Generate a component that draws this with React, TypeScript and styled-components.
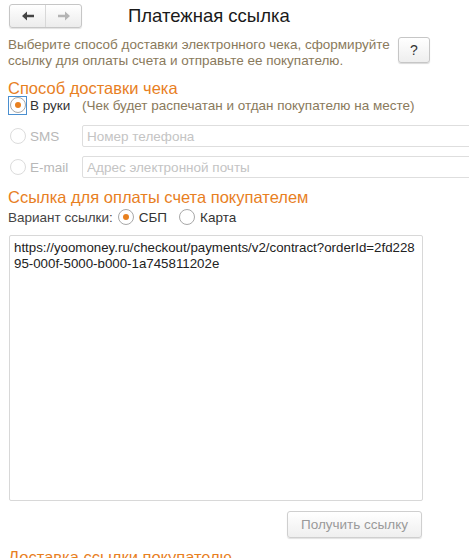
import styled, { createGlobalStyle } from "styled-components";
import { useState } from "react";

const GlobalStyle = createGlobalStyle`
  html, body {
    margin: 0;
    padding: 0;
    background: #ffffff;
    overflow: hidden;
  }
  body {
    font-family: "Liberation Sans", Arial, sans-serif;
    font-size: 13.5px;
    color: #333333;
  }
`;

const URL_TEXT =
  "https://yoomoney.ru/checkout/payments/v2/contract?orderId=2fd22895-000f-5000-b000-1a745811202e";

const App = () => {
  const [kind, setKind] = useState<"sbp" | "card">("sbp");

  return (
    <>
      <GlobalStyle />
      <Page>
        <Header>
          <NavGroup>
            <NavButton>
              <svg width="14" height="10" viewBox="0 0 14 10">
                <path d="M1 5 L6 0.5 V3.8 H13 V6.2 H6 V9.5 Z" fill="#444" />
              </svg>
            </NavButton>
            <NavButton>
              <svg width="14" height="10" viewBox="0 0 14 10">
                <path d="M13 5 L8 0.5 V3.8 H1 V6.2 H8 V9.5 Z" fill="#b4b4b4" />
              </svg>
            </NavButton>
          </NavGroup>
          <Title>Платежная ссылка</Title>
        </Header>

        <IntroRow>
          <Note>
            Выберите способ доставки электронного чека, сформируйте
            <br />
            ссылку для оплаты счета и отправьте ее покупателю.
          </Note>
          <HelpButton>?</HelpButton>
        </IntroRow>

        <SectionTitle>Способ доставки чека</SectionTitle>

        <DeliveryRow first>
          <FocusBox>
            <Radio checked />
          </FocusBox>
          <OptionLabel>В руки</OptionLabel>
          <Hint>(Чек будет распечатан и отдан покупателю на месте)</Hint>
        </DeliveryRow>

        <DeliveryRow>
          <RadioSlot>
            <Radio disabled />
          </RadioSlot>
          <OptionLabel disabled>SMS</OptionLabel>
          <Field placeholder="Номер телефона" disabled />
        </DeliveryRow>

        <DeliveryRow>
          <RadioSlot>
            <Radio disabled />
          </RadioSlot>
          <OptionLabel disabled>E-mail</OptionLabel>
          <Field placeholder="Адрес электронной почты" disabled />
        </DeliveryRow>

        <SectionTitle>Ссылка для оплаты счета покупателем</SectionTitle>

        <VariantRow>
          <span>Вариант ссылки:</span>
          <VariantOption onClick={() => setKind("sbp")}>
            <Radio checked={kind === "sbp"} />
            СБП
          </VariantOption>
          <VariantOption onClick={() => setKind("card")}>
            <Radio checked={kind === "card"} />
            Карта
          </VariantOption>
        </VariantRow>

        <LinkBox readOnly value={URL_TEXT} />

        <ButtonRow>
          <GetButton>Получить ссылку</GetButton>
        </ButtonRow>

        <SectionTitle>Доставка ссылки покупателю</SectionTitle>
      </Page>
    </>
  );
};

export default App;

const Radio = ({ checked, disabled }: IRadioProps) => (
  <RadioCircle disabled={disabled}>{checked && <RadioDot />}</RadioCircle>
);

const Page = styled.div`
  width: 469px;
  height: 558px;
  padding: 4px 0 0 8px;
  box-sizing: border-box;
  overflow: hidden;
`;

const Header = styled.div`
  display: flex;
  align-items: center;
  height: 24px;
`;

const NavGroup = styled.div`
  display: flex;
  margin-left: 1px;
  border: 1px solid #c6c6c6;
  border-radius: 3px;
  background: linear-gradient(#ffffff, #ececec);
  box-shadow: 0 1px 1px rgba(0, 0, 0, 0.12);
`;

const NavButton = styled.div`
  width: 35px;
  height: 22px;
  display: flex;
  align-items: center;
  justify-content: center;
  & + & {
    border-left: 1px solid #d8d8d8;
  }
`;

const Title = styled.h1`
  margin: 0 0 0 46px;
  font-size: 18.5px;
  font-weight: 400;
  color: #1a1a1a;
`;

const IntroRow = styled.div`
  display: flex;
  align-items: flex-start;
  margin-top: 9px;
`;

const Note = styled.div`
  color: #8a7a5c;
  line-height: 16px;
  width: 390px;
  white-space: nowrap;
`;

const HelpButton = styled.div`
  width: 30px;
  height: 24px;
  display: flex;
  align-items: center;
  justify-content: center;
  border: 1px solid #c6c6c6;
  border-radius: 3px;
  background: linear-gradient(#ffffff, #eeeeee);
  box-shadow: 0 1px 1px rgba(0, 0, 0, 0.15);
  font-size: 14px;
  color: #333;
`;

const SectionTitle = styled.h2`
  margin: 10px 0 0 0;
  font-size: 16.5px;
  font-weight: 400;
  color: #e8801f;
  line-height: 18px;
  white-space: nowrap;
`;

const DeliveryRow = styled.div<{ first?: boolean }>`
  display: flex;
  align-items: center;
  height: 22px;
  margin-top: ${(props) => (props.first ? "-3px" : "9px")};
`;

const FocusBox = styled.div`
  width: 17px;
  height: 17px;
  border: 1px solid #4a8fd0;
  display: flex;
  align-items: center;
  justify-content: center;
  margin-right: 3px;
`;

const RadioSlot = styled.div`
  width: 19px;
  height: 19px;
  display: flex;
  align-items: center;
  justify-content: center;
  margin-right: 3px;
`;

const RadioCircle = styled.span<{ disabled?: boolean }>`
  width: 16px;
  height: 16px;
  border-radius: 50%;
  border: 1px solid ${(props) => (props.disabled ? "#dcdcdc" : "#a8a8a8")};
  background: #fff;
  display: inline-flex;
  align-items: center;
  justify-content: center;
  box-sizing: border-box;
  flex-shrink: 0;
`;

const RadioDot = styled.span`
  width: 6px;
  height: 6px;
  border-radius: 50%;
  background: #e8801f;
`;

const OptionLabel = styled.span<{ disabled?: boolean }>`
  width: 52px;
  color: ${(props) => (props.disabled ? "#b8b8b8" : "#333")};
`;

const Hint = styled.span`
  color: #8a7a5c;
  white-space: nowrap;
`;

const Field = styled.input`
  flex: 1;
  height: 22px;
  box-sizing: border-box;
  margin-right: -4px;
  border: 1px solid #dedede;
  border-radius: 2px;
  padding: 0 4px;
  font: inherit;
  background: #fff;
  &::placeholder {
    color: #c4c4c4;
  }
`;

const VariantRow = styled.div`
  display: flex;
  align-items: center;
  height: 20px;
  margin-top: 1px;
  color: #444;
  gap: 5px;
`;

const VariantOption = styled.label`
  display: flex;
  align-items: center;
  gap: 5px;
  margin-right: 7px;
  color: #333;
`;

const LinkBox = styled.textarea`
  display: block;
  width: 414px;
  height: 266px;
  margin: 8px 0 0 1px;
  box-sizing: border-box;
  border: 1px solid #d8d8d8;
  border-radius: 2px;
  padding: 4px 2px 4px 4px;
  font: inherit;
  font-size: 13.3px;
  line-height: 16px;
  color: #222;
  resize: none;
  outline: none;
  word-break: break-all;
`;

const ButtonRow = styled.div`
  display: flex;
  justify-content: flex-end;
  width: 414px;
  margin-top: 10px;
`;

const GetButton = styled.div`
  width: 135px;
  height: 27px;
  box-sizing: border-box;
  display: flex;
  align-items: center;
  justify-content: center;
  border: 1px solid #cfcfcf;
  border-radius: 3px;
  background: linear-gradient(#ffffff, #efefef);
  box-shadow: 0 1px 1px rgba(0, 0, 0, 0.12);
  color: #9a9a9a;
`;

interface IRadioProps {
  checked?: boolean;
  disabled?: boolean;
}
